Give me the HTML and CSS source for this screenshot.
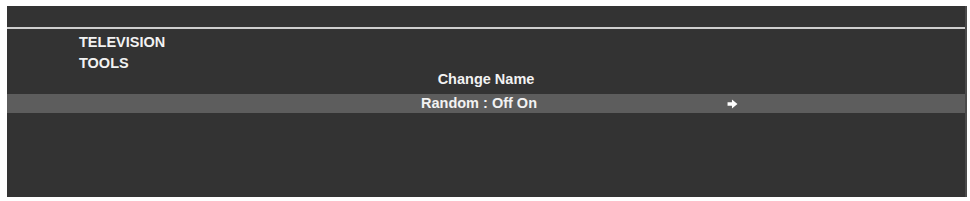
FILE: index.html
```html
<!DOCTYPE html>
<html lang="en">
<head>
    <meta charset="UTF-8">
    <title>Television Tools</title>
    <link rel="stylesheet" href="styles.css">
</head>
<body>
    <div class="screen">
        <div class="topbar"></div>

        <!-- breadcrumb -->
        <div class="crumbs">
            <div>TELEVISION</div>
            <div>TOOLS</div>
        </div>

        <div class="menu">
            <div class="menu-title">Change Name</div>
            <div class="menu-row selected">
                <span></span>
                <span class="label">Random : Off On</span>
                <span class="arrow">
                    <svg width="11" height="10" viewBox="0 0 10 9">
                        <path d="M0.5 3 H4.5 V0.5 L9.5 4.5 L4.5 8.5 V6 H0.5 Z" fill="#fff"/>
                    </svg>
                </span>
            </div>
        </div>
    </div>
</body>
</html>
```

FILE: styles.css
```css
body {
    margin: 0;
    background-color: #fff;
    font-family: 'Liberation Sans', Arial, sans-serif;
}
.screen {
    width: 958px;
    height: 191px;
    margin: 6px 0 0 7px;
    background-color: #333;
    border-right: 2px solid #4a4a4a;
    color: #f2f2f2;
    font-weight: bold;
    font-size: 14.5px;
}
.topbar {
    height: 21px;
    border-bottom: 2px solid #cfcfcf;
}
.crumbs {
    padding: 3px 0 0 72px;
    line-height: 21px;
}
.menu {
    margin-top: -5px;
}
.menu-title {
    line-height: 20px;
    text-align: center;
}
.menu-row {
    display: grid;
    grid-template-columns: 414px 306px 1fr;
    margin-top: 5px;
    height: 19px;
    line-height: 19px;
}
.menu-row.selected {
    background-color: #5d5d5d;
}
.arrow {
    display: flex;
    align-items: center;
}
.arrow svg {
    display: block;
}
```
